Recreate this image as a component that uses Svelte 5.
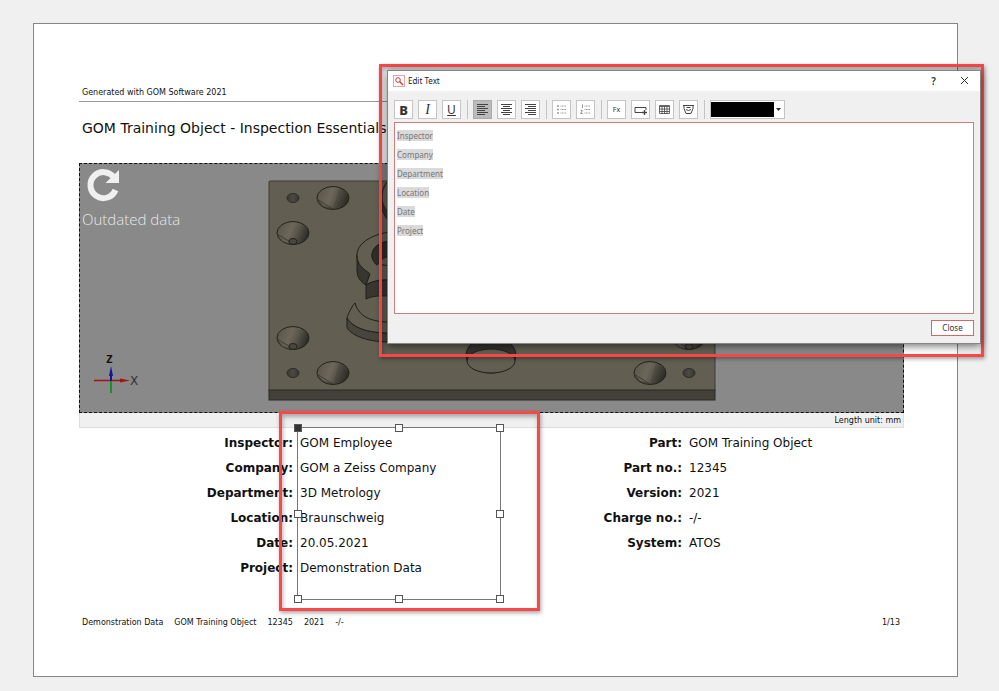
<script lang="ts">
	type Fact = { label: string; value: string };

	const general: Fact[] = [
		{ label: 'Inspector', value: 'GOM Employee' },
		{ label: 'Company', value: 'GOM a Zeiss Company' },
		{ label: 'Department', value: '3D Metrology' },
		{ label: 'Location', value: 'Braunschweig' },
		{ label: 'Date', value: '20.05.2021' },
		{ label: 'Project', value: 'Demonstration Data' }
	];

	const part: Fact[] = [
		{ label: 'Part', value: 'GOM Training Object' },
		{ label: 'Part no.', value: '12345' },
		{ label: 'Version', value: '2021' },
		{ label: 'Charge no.', value: '-/-' },
		{ label: 'System', value: 'ATOS' }
	];

	const footer = ['Demonstration Data', 'GOM Training Object', '12345', '2021', '-/-'];
	const handles = ['nw', 'n', 'ne', 'w', 'e', 'sw', 's', 'se'];

	// hole positions on the plate
	const pins = [[25, 18], [421, 18], [25, 193], [421, 193]];
	const cones = [[65, 18], [382, 18], [65, 193], [382, 193]];
	const sideCones = [[25, 53], [421, 53], [25, 158], [421, 158]];

	let open = $state(true);
	let align = $state('left');
	let color = $state('#000000');
</script>

<main class="page">
	<header class="page-header">Generated with GOM Software 2021</header>
	<h1>GOM Training Object - Inspection Essentials</h1>

	<section class="view">
		<div class="scene">
			<svg class="model" width="448" height="222" viewBox="0 0 448 222" aria-hidden="true">
				<defs>
					<linearGradient id="cone" x1="0" y1="0.2" x2="1" y2="0.5">
						<stop offset="0" stop-color="#5a564c" />
						<stop offset="0.45" stop-color="#6c6759" />
						<stop offset="0.65" stop-color="#59554a" />
						<stop offset="1" stop-color="#2d2b26" />
					</linearGradient>
					<linearGradient id="pin" x1="0" y1="0" x2="1" y2="0">
						<stop offset="0" stop-color="#3a3832" />
						<stop offset="0.5" stop-color="#4c4a42" />
						<stop offset="1" stop-color="#36342e" />
					</linearGradient>
				</defs>
				<rect x="1" y="1" width="446" height="210" rx="1" fill="#625e52" stroke="#3c3a33" />
				<rect x="1" y="210" width="446" height="10" fill="#434038" stroke="#2a2824" />
				{#each pins as [x, y]}
					<ellipse cx={x} cy={y} rx="6" ry="4.500" fill="url(#pin)" stroke="#2d2b26" />
				{/each}
				{#each cones as [x, y]}
					<g transform="translate({x} {y})">
						<ellipse rx="16" ry="11.500" fill="url(#cone)" stroke="#24221d" />
						<path d="M0 11L6 -10A16 11.500 0 0 1 4 10.500Z" fill="#2d2b26" opacity=".2" />
						<path d="M-16 1L0 11L-10 8.500Z" fill="#625e52" stroke="#34312b" stroke-width=".7" />
					</g>
				{/each}
				{#each sideCones as [x, y]}
					<g transform="translate({x} {y})">
						<ellipse rx="16" ry="11.500" fill="url(#cone)" stroke="#24221d" />
						<path d="M-16 1L-4 8L-4 11L-11 8.500Z" fill="#625e52" stroke="#34312b" stroke-width=".7" />
						<ellipse cy="8.500" rx="4" ry="3" fill="#4a473e" stroke="#24221d" />
					</g>
				{/each}
				<path d="M120 1C112 9 112 24 120 32V40C112 32 113 20 114 12" fill="#35332d" stroke="#24221d" />
				<!-- raised G -->
				<path d="M89 75C89 88 101 91 102 94L98 105C92 102 89 96 89 91Z" fill="#38362f" stroke="#201f1b" />
				<path d="M134 51C112 51 89 60 89 75C89 88 100 91 102 94L98 105C106 100 116 99 134 101V86C112 86 104 84 104 75C104 66 114 60 134 60Z" fill="#625e52" stroke="#201f1b" />
				<path d="M134 60C112 60 104 67 104 76C104 80 107 84 109 85C113 77 122 75 134 75Z" fill="#302e28" stroke="#201f1b" />
				<path d="M98 105C106 100 116 99 134 101V118C118 115 106 115 98 119Z" fill="#38362f" stroke="#201f1b" />
				<!-- lower arc -->
				<path d="M79 138C87 151 108 154 134 153V162C110 163 88 160 79 148Z" fill="#48453d" stroke="#201f1b" />
				<path d="M87 123C84 126 80 134 79 138C87 151 108 154 134 153V142C108 143 92 140 87 123Z" fill="#625e52" stroke="#201f1b" />
				<!-- centre bore -->
				<ellipse cx="223" cy="175" rx="25" ry="18" fill="#35332d" stroke="#201f1b" />
				<ellipse cx="223" cy="181" rx="24" ry="12" fill="#625e52" stroke="#201f1b" />
			</svg>

			<div class="outdated">
				<svg width="36" height="36" viewBox="0 0 36 36" aria-hidden="true">
					<path d="M28 9.500A13 13 0 1 0 29.500 22" fill="none" stroke="#f0f0f0" stroke-width="6" />
					<path d="M33 2V15H19.500Z" fill="#f0f0f0" />
				</svg>
				<span>Outdated data</span>
			</div>

			<svg class="axes" width="48" height="44" viewBox="0 0 48 44" aria-label="X and Z axes">
				<path d="M2 26.500H30" stroke="#a01414" stroke-width="1.500" />
				<path d="M28 24.500L38 26.500L28 28.500Z" fill="#a01414" />
				<path d="M19 26V39" stroke="#14902c" stroke-width="2" />
				<path d="M19 27V20" stroke="#1414a0" stroke-width="2" />
				<path d="M17 22L19 12L21 22Z" fill="#1414a0" />
				<text x="14" y="9" class="axis-z">Z</text>
				<text x="38" y="31" class="axis-x">X</text>
			</svg>
		</div>
		<div class="unit">Length unit: mm</div>
	</section>

	<section class="facts">
		<dl>
			{#each general as fact}
				<dt>{fact.label}:</dt>
				<dd>{fact.value}</dd>
			{/each}
			<div class="callout callout-values">
				<div class="selection">
					{#each handles as handle}
						<span class="handle {handle}"></span>
					{/each}
				</div>
			</div>
		</dl>
		<dl>
			{#each part as fact}
				<dt>{fact.label}:</dt>
				<dd>{fact.value}</dd>
			{/each}
		</dl>
	</section>

	<footer>
		{#each footer as item}
			<span>{item}</span>
		{/each}
		<span class="page-number">1/13</span>
	</footer>
</main>

{#if open}
	<div class="callout callout-dialog">
		<div class="dialog" role="dialog" aria-labelledby="dialog-title">
			<div class="titlebar">
				<svg width="12" height="12" viewBox="0 0 12 12" aria-hidden="true">
					<rect x=".5" y=".5" width="11" height="11" fill="#fff" stroke="#e8a4a6" />
					<circle cx="5" cy="5" r="2.300" fill="none" stroke="#c8363a" />
					<path d="M6.800 6.800L10 10" stroke="#c8363a" stroke-width="1.400" />
				</svg>
				<h2 id="dialog-title">Edit Text</h2>
				<button class="window-button" aria-label="Help">?</button>
				<button class="window-button" aria-label="Close window" onclick={() => (open = false)}>
					<svg width="9" height="9" viewBox="0 0 9 9"><path d="M1 1L8 8M8 1L1 8" stroke="#333" /></svg>
				</button>
			</div>

			<div class="toolbar" role="toolbar" aria-label="Formatting">
				<button class="bold">B</button>
				<button class="italic">I</button>
				<button class="underline">U</button>
				<span class="separator"></span>
				<button aria-label="Align left" class:active={align === 'left'} onclick={() => (align = 'left')}>
					<svg viewBox="0 0 13 13"><path d="M1 1.500H12M1 3.500H9M1 5.500H12M1 7.500H9M1 9.500H12M1 11.500H9" /></svg>
				</button>
				<button aria-label="Align center" class:active={align === 'center'} onclick={() => (align = 'center')}>
					<svg viewBox="0 0 13 13"><path d="M1 1.500H12M3 3.500H10M1 5.500H12M3 7.500H10M1 9.500H12M3 11.500H10" /></svg>
				</button>
				<button aria-label="Align right" class:active={align === 'right'} onclick={() => (align = 'right')}>
					<svg viewBox="0 0 13 13"><path d="M1 1.500H12M4 3.500H12M1 5.500H12M4 7.500H12M1 9.500H12M4 11.500H12" /></svg>
				</button>
				<span class="separator"></span>
				<button aria-label="Bulleted list" class="faint">
					<svg viewBox="0 0 13 13"><path d="M2 3H4M2 6.500H4M2 10H4" stroke-width="1.500" /><path d="M5.500 3H11M5.500 6.500H11M5.500 10H11" stroke-dasharray="1 .5" /></svg>
				</button>
				<button aria-label="Numbered list" class="faint">
					<svg viewBox="0 0 13 13"><path d="M3.500 1.500V5M1.500 7.500H3.500L1.500 10.500H4" /><path d="M5.500 3H11M5.500 6.500H11M5.500 10H11" stroke-dasharray="1 .5" /></svg>
				</button>
				<span class="separator"></span>
				<button class="function">Fx</button>
				<button aria-label="Insert field">
					<svg viewBox="0 0 13 13"><path d="M8 9.500H1V4.500H12V7" /><path d="M10.500 7V12M8 9.500H13" stroke-width="1.300" /></svg>
				</button>
				<button aria-label="Insert table">
					<svg viewBox="0 0 13 13"><path d="M1.500 2.500H11.500V10.500H1.500ZM1.500 3.500H11.500M1.500 6H11.500M1.500 8.500H11.500M4 3V11M6.500 3V11M9 3V11" stroke-width=".8" /></svg>
				</button>
				<button aria-label="Insert symbol">
					<svg viewBox="0 0 13 13"><path d="M1 2.500H12M2 2.500V5.500L4 10.500H9L11 5.500V2.500M4.500 4.500H8.500M4 6.500L6.500 7.500L9 6.500" /></svg>
				</button>
				<span class="separator"></span>
				<span class="color">
					<select aria-label="Text colour" bind:value={color}>
						<option value="#000000" aria-label="Black"></option>
						<option value="#ffffff" aria-label="White"></option>
					</select>
					<svg width="5" height="3" viewBox="0 0 5 3" aria-hidden="true"><path d="M0 0H5L2.500 3Z" fill="#333" /></svg>
				</span>
			</div>

			<div class="editor" role="textbox" aria-multiline="true" aria-label="Text" tabindex="0" contenteditable="true" style:text-align={align}>
				{#each general as fact}
					<p><span class="token">{fact.label}</span></p>
				{/each}
			</div>

			<div class="actions">
				<button class="close" onclick={() => (open = false)}>Close</button>
			</div>
		</div>
	</div>
{/if}

<style>
	:global(body) {
		background: #f0f0f0;
	}

	:global(#app) {
		display: flow-root;
		padding-top: 23px;
	}

	.page {
		margin: 0 41px 14px 33px;
		padding: 63px 53px 0 45px;
		border: 1px solid #858585;
		background: #fff;
		color: #111;
		font-family: 'DejaVu Sans', Verdana, sans-serif;
		font-size: 12px;
	}

	.page-header {
		padding: 0 3px 2px;
		border-bottom: 1px solid #999;
		font-size: 8px;
		line-height: 12px;
	}

	h1 {
		margin: 16px 3px 25px;
		font-size: 14px;
		line-height: 20px;
		font-weight: 400;
	}

	.scene {
		display: grid;
		height: 248px;
		border: 1px dashed #111;
		background: #898989;
	}

	.scene > * {
		grid-area: 1 / 1;
	}

	.model {
		justify-self: center;
		margin-top: 16px;
	}

	.outdated {
		display: flex;
		flex-direction: column;
		padding: 4px 2px;
		color: #e8e8e8;
		font-family: 'Open Sans', 'Noto Sans', sans-serif;
		font-size: 15px;
		font-weight: 300;
		line-height: 31px;
	}

	.outdated svg {
		margin-left: 4px;
	}

	.axes {
		align-self: end;
		margin: 0 0 14px 12px;
	}

	.axis-z {
		font: bold 11px 'DejaVu Sans Mono', monospace;
		fill: #111;
	}

	.axis-x {
		font: 12px 'DejaVu Sans', sans-serif;
		fill: #333;
	}

	.unit {
		padding: 1px 2px 0;
		border: 1px solid #ddd;
		border-top: 0;
		background: #f0f0f0;
		font-size: 8px;
		line-height: 13px;
		text-align: right;
	}

	.facts {
		display: grid;
		grid-template-columns: 389fr 436fr;
		padding-top: 3px;
	}

	dl {
		position: relative;
		display: grid;
		grid-template-columns: 214px 1fr;
		align-content: start;
		column-gap: 7px;
		margin: 0;
		line-height: 25px;
	}

	dt {
		font-weight: 700;
		text-align: right;
	}

	dd {
		margin: 0;
	}

	footer {
		display: flex;
		gap: 11px;
		padding: 36px 4px 47px 3px;
		font-size: 8px;
		line-height: 12px;
	}

	.page-number {
		margin-left: auto;
	}

	.callout {
		position: absolute;
		border: 3px solid #f84848;
		box-shadow: 1px 2px 4px rgba(0, 0, 0, 0.35), inset 1px 3px 4px rgba(0, 0, 0, 0.3);
	}

	.callout-values {
		top: -20px;
		left: 200px;
		padding: 13px 36px 8px 15px;
	}

	.callout-dialog {
		top: 64px;
		right: 15px;
		left: 379px;
		padding: 3px 0 10px 5px;
	}

	.selection {
		position: relative;
		width: 202px;
		height: 171px;
		border: 1px solid #777;
	}

	.handle {
		position: absolute;
		width: 6px;
		height: 6px;
		border: 1px solid #555;
		background: #fff;
		transform: translate(-50%, -50%);
	}

	.nw, .n, .ne {
		top: 0;
	}

	.w, .e {
		top: 50%;
	}

	.sw, .s, .se {
		top: 100%;
	}

	.nw, .w, .sw {
		left: 0;
	}

	.n, .s {
		left: 50%;
	}

	.ne, .e, .se {
		left: 100%;
	}

	.nw {
		background: #333;
	}

	.dialog {
		border: 1px solid #858585;
		background: #f0f0f0;
		box-shadow: 0 2px 8px rgba(0, 0, 0, 0.55);
		color: #222;
		font-family: 'Noto Sans', 'Open Sans', sans-serif;
		font-size: 8px;
	}

	button {
		display: flex;
		align-items: center;
		justify-content: center;
		padding: 0;
		border: 1px solid #c4c4c4;
		background: #fff;
		color: #333;
		font: inherit;
	}

	.titlebar {
		display: flex;
		align-items: center;
		height: 19px;
		padding: 0 0 1px 5px;
		background: #fff;
	}

	h2 {
		flex: 1;
		margin: 0 0 0 3px;
		font-size: 8px;
		line-height: 12px;
		font-weight: 400;
	}

	.window-button {
		width: 31px;
		height: 18px;
		border: 0;
		font-size: 10px;
		font-weight: 600;
	}

	.toolbar {
		display: flex;
		gap: 5px;
		padding: 9px 6px 3px;
	}

	.toolbar button {
		width: 19px;
		height: 19px;
	}

	.toolbar button svg {
		width: 13px;
		height: 13px;
		fill: none;
		stroke: #444;
	}

	.toolbar .active {
		border-color: #aaa;
		background: #bbb;
	}

	.toolbar .faint svg {
		stroke: #999;
	}

	.toolbar .bold {
		font-size: 13px;
		font-weight: 800;
		line-height: 16px;
	}

	.toolbar .italic {
		font: italic 14px 'Liberation Serif', serif;
	}

	.toolbar .underline {
		font-size: 12px;
		line-height: 16px;
		text-decoration: underline;
	}

	.toolbar .function {
		font-size: 7px;
	}

	.separator {
		width: 1px;
		margin-left: 1px;
		background: #c4c4c4;
	}

	.color {
		position: relative;
		display: flex;
		align-items: center;
	}

	.color select {
		width: 75px;
		height: 19px;
		border: 1px solid #c4c4c4;
		border-radius: 0;
		background: linear-gradient(#000, #000) 0 50% / 63px 15px no-repeat #fff;
		appearance: none;
	}

	.color svg {
		position: absolute;
		right: 4px;
		pointer-events: none;
	}

	.editor {
		height: 187px;
		margin: 0 6px;
		padding: 3px 2px 0;
		border: 1px solid #d07c7c;
		background: #fff;
		color: #777;
	}

	.editor p {
		margin: 0;
		line-height: 19px;
	}

	.token {
		background: #dadada;
	}

	.actions {
		display: flex;
		justify-content: flex-end;
		padding: 6px 6px 7px;
	}

	.close {
		width: 43px;
		height: 16px;
		border-color: #cc6a6c;
		line-height: 12px;
	}
</style>
